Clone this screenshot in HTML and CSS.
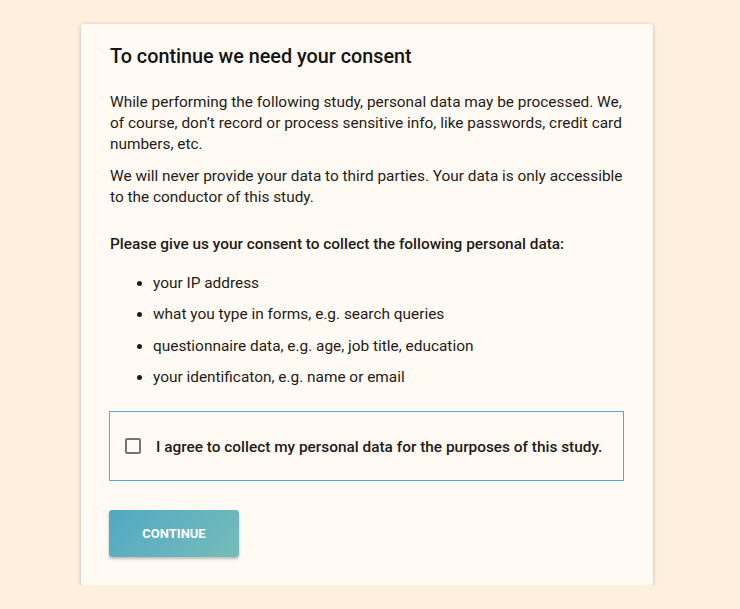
FILE: index.html
```html
<!DOCTYPE html>
<html>
<head>
    <link rel="stylesheet" href="styles.css">
</head>
<body>
    <div class="card">
        <h2>To continue we need your consent</h2>
        <p>While performing the following study, personal data may be processed. We, of course, don’t record or process sensitive info, like passwords, credit card numbers, etc.</p>
        <p>We will never provide your data to third parties. Your data is only accessible to the conductor of this study.</p>

        <p class="ask">Please give us your consent to collect the following personal data:</p>
        <ul>
            <li>your IP address</li>
            <li>what you type in forms, e.g. search queries</li>
            <li>questionnaire data, e.g. age, job title, education</li>
            <li>your identificaton, e.g. name or email</li>
        </ul>

        <label class="agree">
            <input type="checkbox" id="agree">
            <span class="box"></span>
            <span class="agree-text">I agree to collect my personal data for the purposes of this study.</span>
        </label>

        <button type="button" class="continue">Continue</button>
    </div>
</body>
</html>
```

FILE: styles.css
```css
body {
    margin: 0;
    font-family: Roboto, "Liberation Sans", sans-serif;
    background-color: #fef0dc;
    color: #1f1a17;
}

.card {
    width: 572px;
    box-sizing: border-box;
    margin: 24px 0 0 81px;
    padding: 21px 29px 28px 28px;
    background: #fffaf4;
    border-radius: 3px;
    box-shadow: 0 1px 4px rgba(0, 0, 0, 0.25);
}

h2 {
    margin: 0 0 23px 1px;
    font-size: 19.8px;
    font-weight: 500;
    line-height: 24px;
    color: #141414;
}

p {
    margin: 0 0 11px 1px;
    font-size: 15.4px;
    line-height: 21px;
}

.ask {
    margin-top: 26px;
    font-weight: 500;
}

ul {
    margin: 18px 0 0 0;
    padding-left: 44px;
}

li {
    font-size: 15.4px;
    line-height: 21px;
    margin-bottom: 10.3px;
}

.agree {
    display: flex;
    align-items: center;
    margin-top: 23px;
    height: 70px;
    box-sizing: border-box;
    padding-left: 15px;
    border: 1px solid #5aa9c0;
    font-size: 15.4px;
    font-weight: 500;
    cursor: pointer;
}

.agree input {
    display: none;
}

.agree-text {
    padding-top: 3px;
}

.box {
    width: 12px;
    height: 12px;
    border: 2px solid #757575;
    border-radius: 2px;
    margin-right: 15px;
}

.continue {
    display: block;
    margin-top: 29px;
    width: 130px;
    height: 47px;
    border: none;
    border-radius: 3px;
    background: linear-gradient(135deg, #52a8c3, #76bdbb);
    color: #fff;
    font-family: Roboto, "Liberation Sans", sans-serif;
    font-size: 13px;
    font-weight: 700;
    text-transform: uppercase;
    box-shadow: 0 2px 3px rgba(0, 0, 0, 0.25);
    cursor: pointer;
}
```
